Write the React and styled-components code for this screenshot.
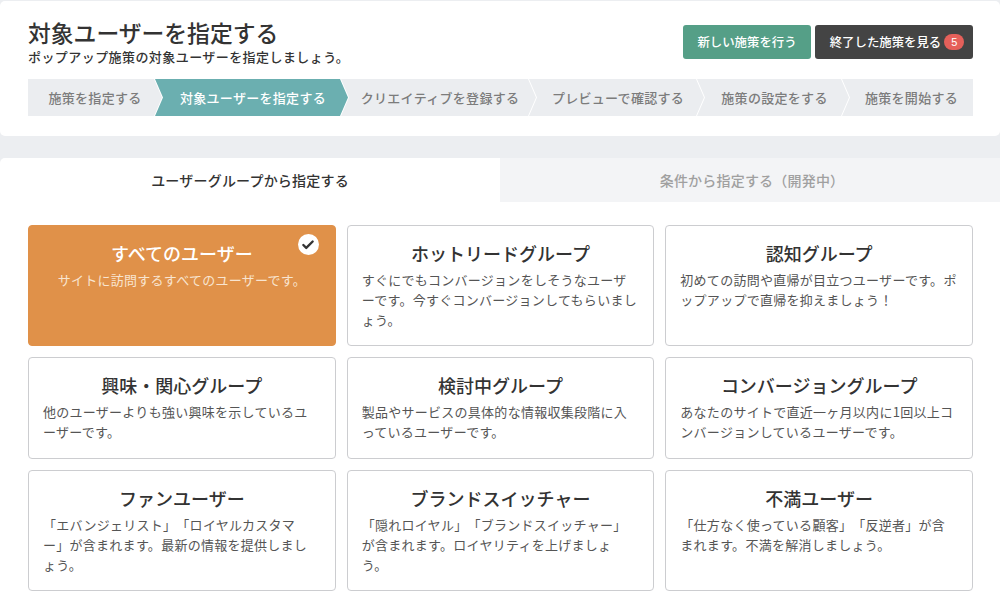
import React from "react";
import styled, { createGlobalStyle } from "styled-components";
import { Check } from "lucide-react";

const Global = createGlobalStyle`
  html, body { margin: 0; padding: 0; background: #eceef1; }
  body { font-family: "Noto Sans CJK JP", "Noto Sans", sans-serif; color: #333; width: 1000px; height: 600px; overflow: hidden; }
`;

const Page = styled.div`
  width: 1000px;
  height: 600px;
  padding-top: 1px;
  box-sizing: border-box;
  display: flex;
  flex-direction: column;
`;

const Header = styled.header`
  height: 135px;
  box-sizing: border-box;
  background: #fff;
  border-radius: 5px;
  padding: 0 27px 0 28px;
  display: flex;
  flex-direction: column;
`;

const HeaderTop = styled.div`
  height: 78px;
  display: flex;
  justify-content: space-between;
`;

const Heading = styled.div`
  padding-top: 17px;
`;

const Title = styled.h1`
  margin: 0;
  font-size: 22.8px;
  line-height: 30px;
  font-weight: 500;
  color: #333;
`;

const Sub = styled.p`
  margin: 0;
  font-size: 13px;
  line-height: 18px;
  font-weight: 500;
  letter-spacing: 0.43px;
  color: #333;
`;

const Actions = styled.div`
  display: flex;
  gap: 4px;
  padding-top: 24px;
`;

const Button = styled.button`
  height: 34px;
  width: ${(p) => p.$w}px;
  border: 0;
  border-radius: 3px;
  background: ${(p) => p.$bg};
  color: #fff;
  font: 500 12.4px "Noto Sans CJK JP", sans-serif;
  display: flex;
  align-items: center;
  justify-content: center;
  gap: 3px;
  padding: 0 0 0 ${(p) => p.$inset || 0}px;
`;

const Badge = styled.span`
  width: 20px;
  height: 16px;
  border-radius: 8px;
  background: #e5605a;
  color: #fff;
  font: 400 11px "Liberation Sans", sans-serif;
  display: flex;
  align-items: center;
  justify-content: center;
`;

const Steps = styled.ol`
  margin: 0;
  padding: 0;
  list-style: none;
  display: flex;
  height: 37px;
`;

const Step = styled.li`
  flex: none;
  box-sizing: border-box;
  width: ${(p) => p.$w}px;
  margin-right: ${(p) => (p.$last ? 0 : -7)}px;
  padding-left: ${(p) => (p.$last ? 8 : p.$first ? 0 : 3)}px;
  background: ${(p) => (p.$active ? "#6bafb0" : "#ebedf0")};
  color: ${(p) => (p.$active ? "#fff" : "#7c7c7c")};
  font-size: 13px;
  font-weight: 500;
  letter-spacing: 0.3px;
  display: flex;
  align-items: center;
  justify-content: center;
  clip-path: ${(p) =>
    p.$last
      ? "polygon(0 0, 100% 0, 100% 100%, 0 100%, 8px 50%)"
      : p.$first
      ? "polygon(0 0, calc(100% - 8px) 0, 100% 50%, calc(100% - 8px) 100%, 0 100%)"
      : "polygon(0 0, calc(100% - 8px) 0, 100% 50%, calc(100% - 8px) 100%, 0 100%, 8px 50%)"};
  z-index: ${(p) => (p.$active ? 1 : 0)};
`;

const Tabs = styled.nav`
  margin-top: 22px;
  display: flex;
  height: 44px;
`;

const Tab = styled.div`
  flex: none;
  box-sizing: border-box;
  width: 500px;
  padding-left: ${(p) => (p.$active ? 0 : 4)}px;
  background: ${(p) => (p.$active ? "#fff" : "#f3f4f6")};
  color: ${(p) => (p.$active ? "#333" : "#a0a0a0")};
  border-radius: ${(p) => (p.$active ? "5px 0 0 0" : "0")};
  font-size: 14px;
  font-weight: 500;
  letter-spacing: 0.2px;
  display: flex;
  align-items: center;
  justify-content: center;
`;

const Panel = styled.main`
  flex: 1;
  background: #fff;
  padding: 23px 27px 0 28px;
`;

const Grid = styled.div`
  display: grid;
  grid-template-columns: repeat(3, 1fr);
  grid-template-rows: 121px 102px 121px;
  gap: 11px;
`;

const Card = styled.article`
  position: relative;
  box-sizing: border-box;
  border: 1px solid ${(p) => (p.$selected ? "#e09149" : "#cccdd0")};
  border-radius: 4px;
  background: ${(p) => (p.$selected ? "#e09149" : "#fff")};
  color: ${(p) => (p.$selected ? "#fff" : "#333")};
  padding: 13px 14px 0;
`;

const CardTitle = styled.h2`
  margin: 0;
  text-align: center;
  font-size: 18px;
  line-height: 28px;
  font-weight: 500;
`;

const CardText = styled.p`
  margin: 3px 0 0;
  font-size: 13px;
  line-height: 20px;
  letter-spacing: 0.27px;
  white-space: pre;
  text-spacing-trim: space-all;
  color: ${(p) => (p.$selected ? "#f8e4d0" : "#555")};
  text-align: ${(p) => (p.$selected ? "center" : "left")};
`;

const CheckMark = styled.span`
  position: absolute;
  top: 8px;
  right: 16px;
  width: 21px;
  height: 21px;
  border-radius: 50%;
  background: #fff;
  color: #333;
  display: flex;
  align-items: center;
  justify-content: center;
`;

const steps = [
  ["施策を指定する", 134],
  ["対象ユーザーを指定する", 193],
  ["クリエイティブを登録する", 195],
  ["プレビューで確認する", 175],
  ["施策の設定をする", 152],
  ["施策を開始する", 131],
];

const groups = [
  ["すべてのユーザー", "サイトに訪問するすべてのユーザーです。"],
  ["ホットリードグループ", "すぐにでもコンバージョンをしそうなユーザ\nーです。今すぐコンバージョンしてもらいまし\nょう。"],
  ["認知グループ", "初めての訪問や直帰が目立つユーザーです。ポ\nップアップで直帰を抑えましょう！"],
  ["興味・関心グループ", "他のユーザーよりも強い興味を示しているユ\nーザーです。"],
  ["検討中グループ", "製品やサービスの具体的な情報収集段階に入\nっているユーザーです。"],
  ["コンバージョングループ", "あなたのサイトで直近一ヶ月以内に1回以上コ\nンバージョンしているユーザーです。"],
  ["ファンユーザー", "「エバンジェリスト」「ロイヤルカスタマ\nー」が含まれます。最新の情報を提供しまし\nょう。"],
  ["ブランドスイッチャー", "「隠れロイヤル」「ブランドスイッチャー」\nが含まれます。ロイヤリティを上げましょ\nう。"],
  ["不満ユーザー", "「仕方なく使っている顧客」「反逆者」が含\nまれます。不満を解消しましょう。"],
];

export default function App() {
  return (
    <Page>
      <Global />
      <Header>
        <HeaderTop>
          <Heading>
            <Title>対象ユーザーを指定する</Title>
            <Sub>ポップアップ施策の対象ユーザーを指定しましょう。</Sub>
          </Heading>
          <Actions>
            <Button $w={128} $bg="#559f87">新しい施策を行う</Button>
            <Button $w={158} $bg="#444444" $inset={6}>
              終了した施策を見る<Badge>5</Badge>
            </Button>
          </Actions>
        </HeaderTop>
        <Steps>
          {steps.map(([label, w], i) => (
            <Step key={label} $w={w} $active={i === 1} $first={i === 0} $last={i === steps.length - 1}>
              {label}
            </Step>
          ))}
        </Steps>
      </Header>
      <Tabs>
        <Tab $active>ユーザーグループから指定する</Tab>
        <Tab>条件から指定する（開発中）</Tab>
      </Tabs>
      <Panel>
        <Grid>
          {groups.map(([title, text], i) => (
            <Card key={title} $selected={i === 0}>
              <CardTitle>{title}</CardTitle>
              <CardText $selected={i === 0}>{text}</CardText>
              {i === 0 && (
                <CheckMark>
                  <Check size={14} strokeWidth={4} />
                </CheckMark>
              )}
            </Card>
          ))}
        </Grid>
      </Panel>
    </Page>
  );
}
